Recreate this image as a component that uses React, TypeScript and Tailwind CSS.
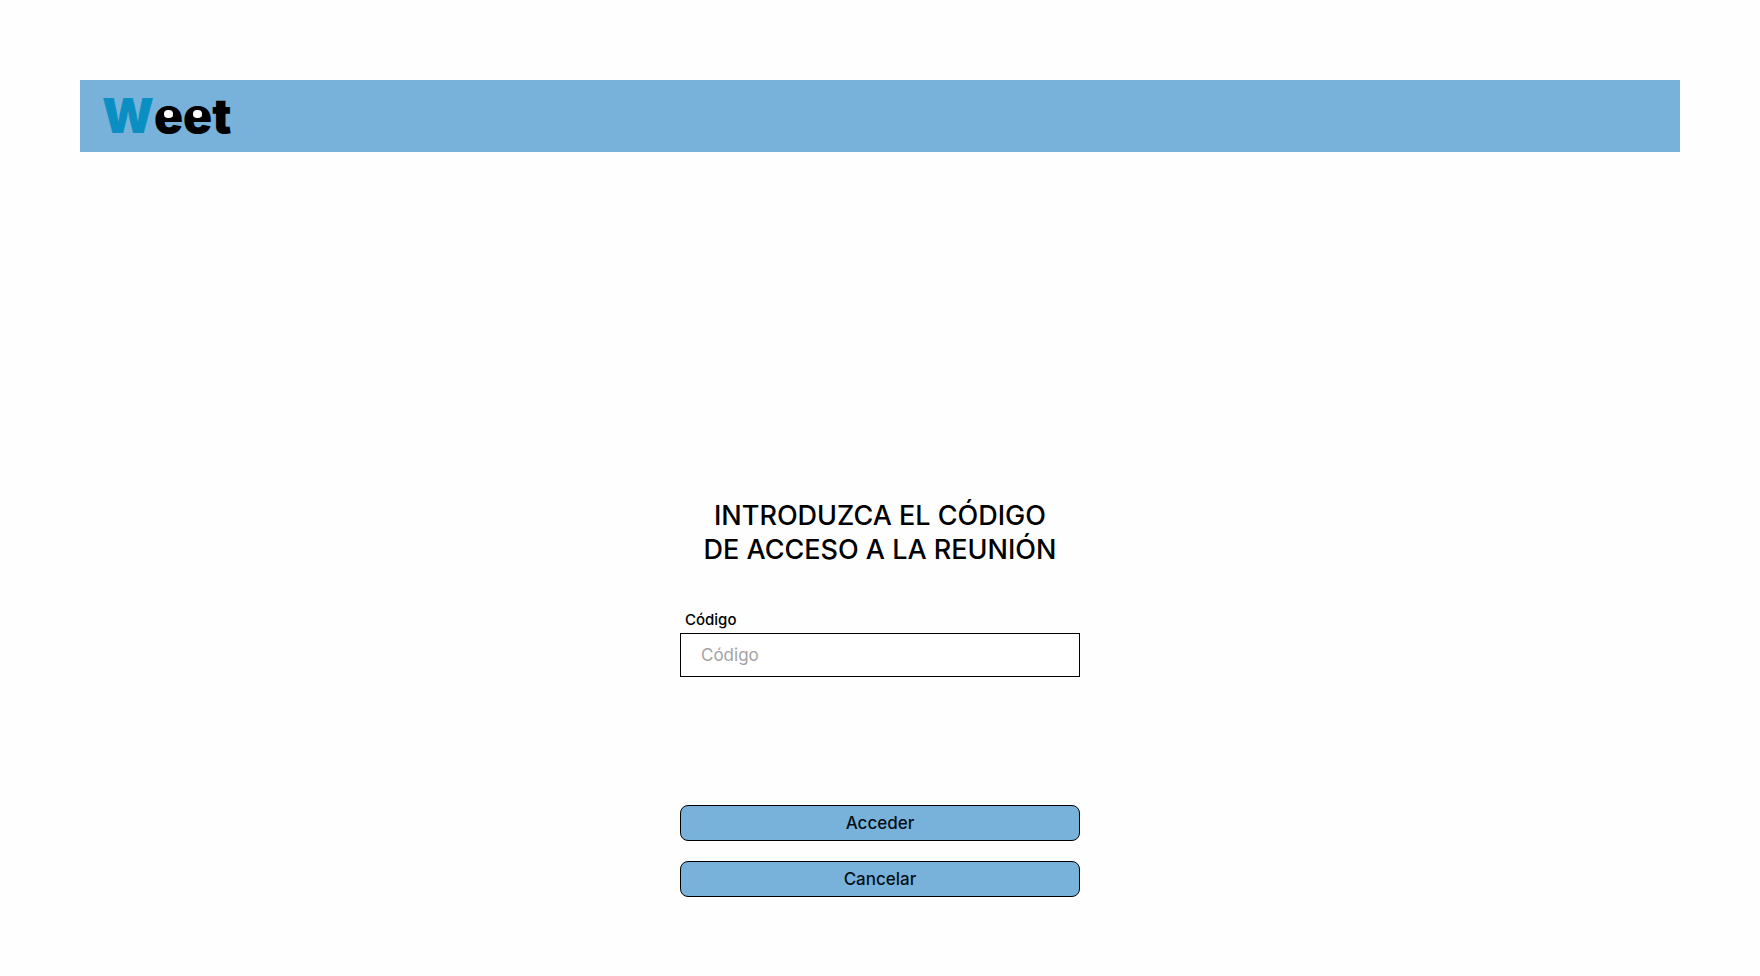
import type { ReactNode } from "react";

function LogoE() {
  return (
    <span className="relative inline-block">
      e
      <span
        aria-hidden="true"
        className="absolute top-[18px] left-[10px] h-2 w-[9px] rounded-full bg-white"
      />
    </span>
  );
}

function Logo() {
  return (
    <a href="#" aria-label="Weet" className="text-5xl leading-none font-black text-black">
      <span className="text-[#0a8fc2]">W</span>
      <LogoE />
      <LogoE />
      <span>t</span>
    </a>
  );
}

function ActionButton({ type, children }: { type: "submit" | "button"; children: ReactNode }) {
  return (
    <button
      type={type}
      className="h-9 w-full rounded-lg border border-black bg-[#78b2db] text-[17px] leading-6 font-medium text-[#051018]"
    >
      {children}
    </button>
  );
}

export default function App() {
  return (
    <div className="min-h-screen bg-[#fefefe] p-20 font-['Inter','Liberation_Sans',sans-serif] text-black">
      <header className="flex h-18 items-center bg-[#78b2db] px-[22px]">
        <Logo />
      </header>
      <main className="flex justify-center pt-[347px]">
        <form className="w-full max-w-[400px]" onSubmit={(event) => event.preventDefault()}>
          <h1 className="text-center text-[27px] leading-[34px] font-medium">
            INTRODUZCA EL CÓDIGO
            <br />
            DE ACCESO A LA REUNIÓN
          </h1>
          <label htmlFor="code" className="mt-[43px] block px-[5px] text-[15px] leading-5 font-medium">
            Código
          </label>
          <input
            id="code"
            type="text"
            placeholder="Código"
            className="mt-[3px] block h-11 w-full border border-black bg-white px-5 text-[17px] outline-none placeholder:text-[#a3a3a3]"
          />
          <div className="mt-32 flex flex-col gap-5">
            <ActionButton type="submit">Acceder</ActionButton>
            <ActionButton type="button">Cancelar</ActionButton>
          </div>
        </form>
      </main>
    </div>
  );
}
